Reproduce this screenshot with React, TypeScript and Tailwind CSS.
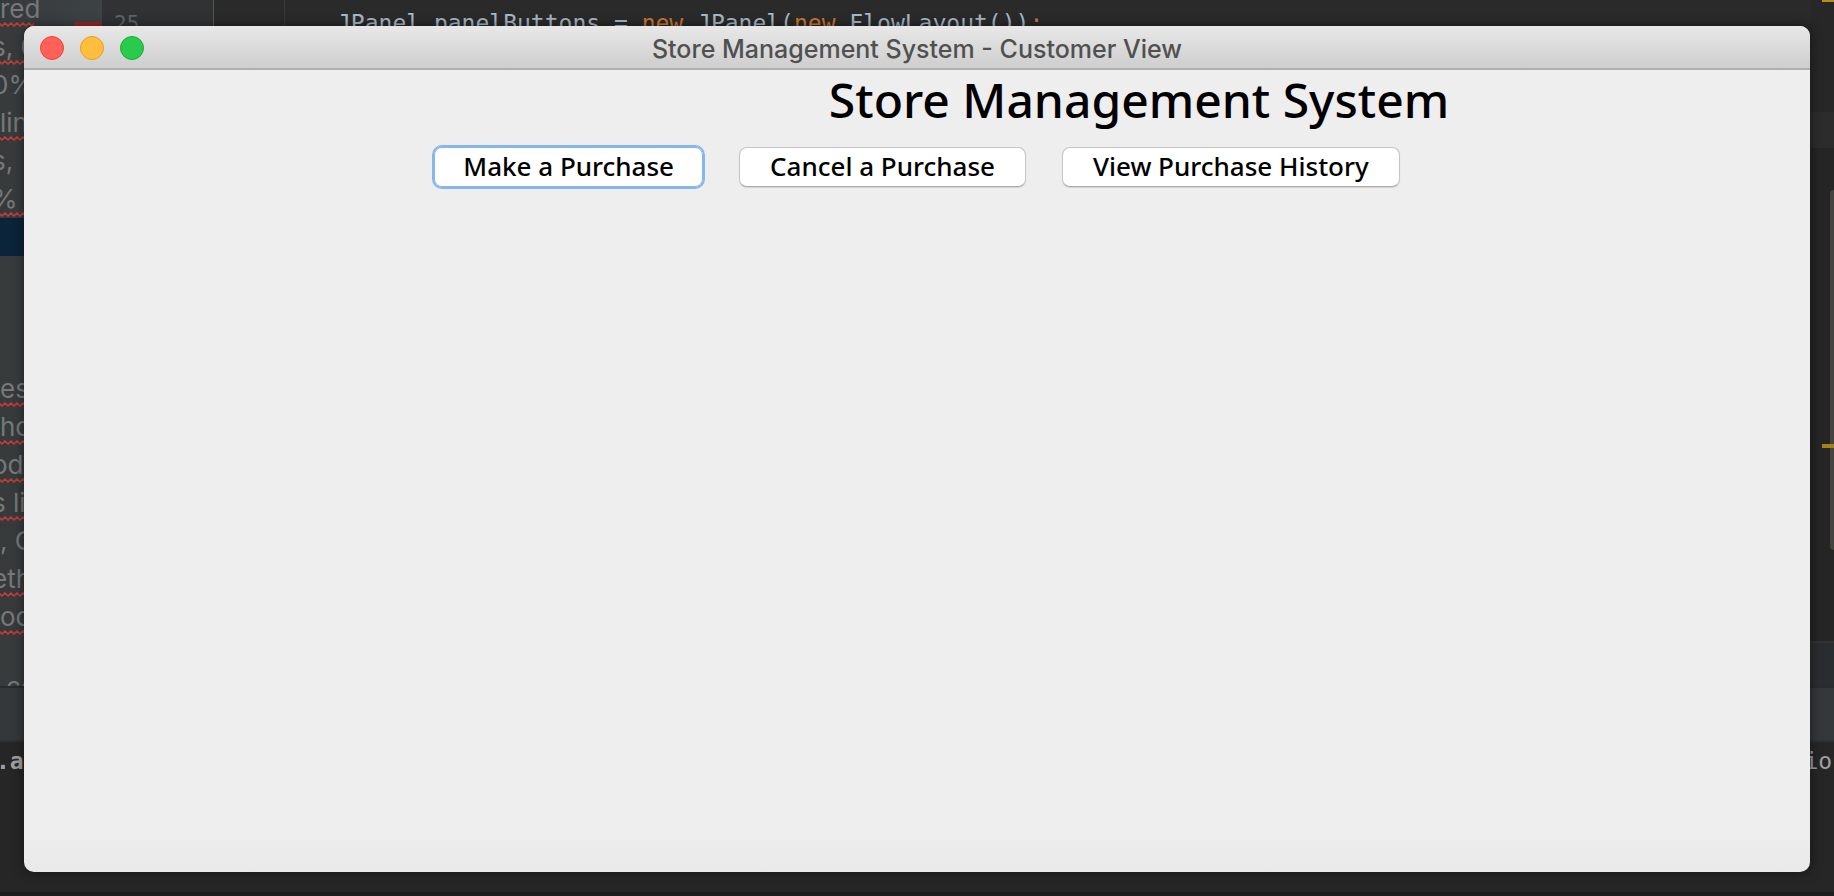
import React from "react";

type Row = { text: string; typo?: boolean; selected?: boolean; scrolled?: boolean };

const rows: Row[] = [
  { text: "red", typo: true },
  { text: "s, 0", typo: true, scrolled: true },
  { text: "0%", scrolled: true },
  { text: "lin", typo: true },
  { text: "s,", scrolled: true },
  { text: "%", typo: true, scrolled: true },
  { text: "", selected: true },
  { text: "" },
  { text: "" },
  { text: "" },
  { text: "es", typo: true },
  { text: "ho", typo: true },
  { text: "ods", typo: true, scrolled: true },
  { text: "s li", typo: true, scrolled: true },
  { text: ", C" },
  { text: "eth", typo: true, scrolled: true },
  { text: "oc", typo: true },
];

function Squiggle() {
  return (
    <svg className="absolute bottom-px left-0 h-[5px] w-[34px]" viewBox="0 0 34 5" fill="none" stroke="#c03c3a" strokeWidth="1.6" aria-hidden="true">
      <path d="M-1 1 L2 4 L5 1 L8 4 L11 1 L14 4 L17 1 L20 4 L23 1 L26 4 L29 1 L32 4 L35 1" />
    </svg>
  );
}

function Sidebar() {
  return (
    <aside className="relative w-[102px] shrink-0 overflow-hidden bg-linear-to-r from-[#363a3b] to-[#3d4245] font-['Inter',sans-serif] text-[26px] leading-[38px] text-[#76787a]">
      <div className="-mt-[10px]">
        {rows.map((row, i) => (
          <div key={i} className={row.selected ? "relative h-[38px] bg-[#0b2439]" : "relative h-[38px] whitespace-nowrap"}>
            <span className={row.scrolled ? "block -indent-2" : "block"}>{row.text}</span>
            {row.typo && <Squiggle />}
          </div>
        ))}
        <div className="pt-8 pl-1.5">co</div>
      </div>
      <span className="absolute top-[22px] right-0 h-1 w-7 bg-[#9c2525]" />
    </aside>
  );
}

function Editor() {
  return (
    <div className="flex min-w-0 flex-1 bg-[#2a2a2a] font-['DejaVu_Sans_Mono',monospace] text-[23px] leading-8 text-[#a9b7c6]">
      <div className="w-28 shrink-0 border-r border-[#555555] bg-[#303234] pt-2 pl-3 text-[21px] text-[#606366]">25</div>
      <div className="w-[71px] shrink-0 border-r border-[#383838]" />
      <pre className="flex-1 overflow-hidden pt-[7px] pl-[52px] font-['DejaVu_Sans_Mono',monospace]">
        JPanel panelButtons = <span className="text-[#cc7832]">new</span> JPanel(<span className="text-[#cc7832]">new</span> FlowLayout())<span className="text-[#cc7832]">;</span>
      </pre>
      <div className="relative w-6 shrink-0 bg-[#252525]">
        <div className="h-28 bg-[#272727]" />
        <div className="h-9 bg-[#2c2c2c]" />
        <span className="absolute top-0 right-0 h-0.5 w-3 bg-[#b98d17]" />
        <span className="absolute top-[190px] right-0 h-[360px] w-1 rounded-l-md bg-[#444340]" />
        <span className="absolute top-[444px] right-0 h-1 w-3 bg-[#a98017]" />
        <div className="absolute inset-x-0 bottom-0 h-[45px] border-t-2 border-[#333333] bg-[#2a2d2f]" />
      </div>
    </div>
  );
}

function Backdrop() {
  return (
    <div className="absolute inset-0 flex flex-col overflow-hidden bg-[#262626]" aria-hidden="true">
      <div className="flex h-[688px] shrink-0 border-b-2 border-[#292b2c]">
        <Sidebar />
        <Editor />
      </div>
      <div className="h-[54px] shrink-0 border-b-2 border-[#303030] bg-[#34383a]" />
      <div className="flex flex-1 justify-between border-b-4 border-[#1e1e1e] pt-[3px] font-['DejaVu_Sans_Mono',monospace] text-[23px] leading-8 font-bold text-[#a0a0a0]">
        <span className="-ml-1">.a</span>
        <span className="-mr-3 font-normal">ion</span>
      </div>
    </div>
  );
}

function TitleBar() {
  return (
    <header className="relative flex h-11 shrink-0 items-center justify-center border-b-2 border-[#b0b0b0] bg-linear-to-b from-[#e8e8e8] to-[#cecece] pt-1">
      <div className="absolute top-[10px] left-4 flex gap-4">
        <button aria-label="Close" className="size-6 rounded-full border border-[#e2463f] bg-[#ff6058]" />
        <button aria-label="Minimize" className="size-6 rounded-full border border-[#dfa023] bg-[#ffbf3c]" />
        <button aria-label="Zoom" className="size-6 rounded-full border border-[#1aab35] bg-[#2acb4c]" />
      </div>
      <span className="font-['Inter',sans-serif] text-[25px] leading-8 font-medium text-[#505050]">Store Management System - Customer View</span>
    </header>
  );
}

const plain = "h-10 rounded-lg border border-[#c6c6c6] border-b-[#adadad] bg-white px-[30px] pb-0.5 shadow-[0_1px_1px_rgba(0,0,0,0.12)]";
const focused = "h-10 rounded-lg border border-[#85b6ec] bg-white px-7 pb-0.5 outline-2 outline-[#85b6ec]";

export default function App() {
  return (
    <div className="relative flex min-h-screen flex-col bg-[#262626]">
      <Backdrop />
      <main className="relative mx-6 mt-[26px] mb-6 flex flex-1 flex-col overflow-hidden rounded-[10px] bg-linear-to-b from-[#eeeeee] from-95% to-[#e9e9e9] font-['Noto_Sans',sans-serif] text-black shadow-[0_0_12px_rgba(0,0,0,0.5)]">
        <TitleBar />
        <h1 className="pl-[444px] text-center text-5xl leading-[60px] font-medium">Store Management System</h1>
        <div className="mt-[17px] flex justify-center gap-9 text-[26px] leading-9 font-medium">
          <button autoFocus className={focused}>Make a Purchase</button>
          <button className={plain}>Cancel a Purchase</button>
          <button className={plain}>View Purchase History</button>
        </div>
      </main>
    </div>
  );
}
